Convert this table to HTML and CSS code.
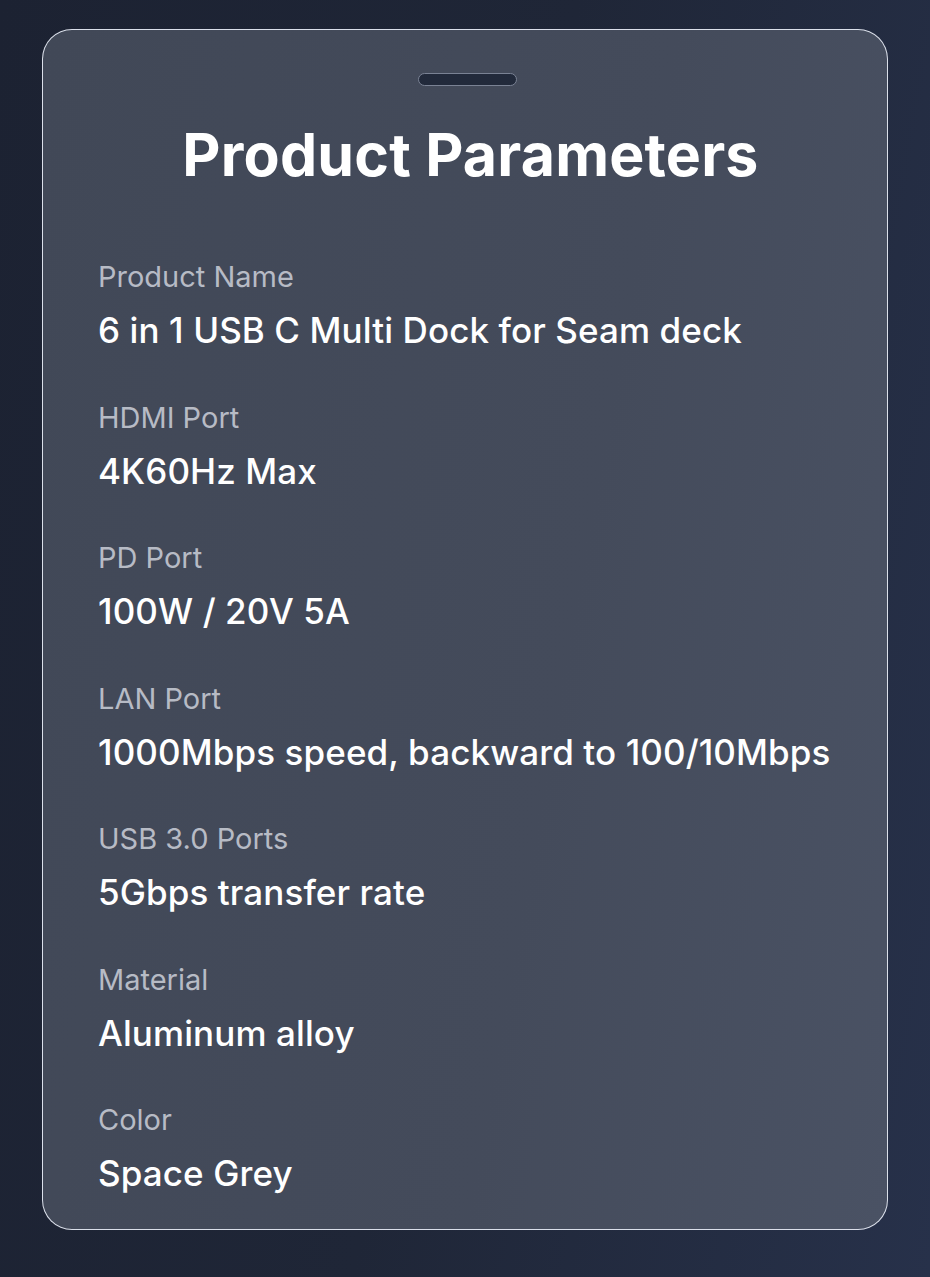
FILE: index.html
```html
<!DOCTYPE html>
<html lang="en">
<head>
<meta charset="utf-8">
<title>Product Parameters</title>
<link rel="stylesheet" href="styles.css">
</head>
<body>
<main class="card">
  <div class="handle"></div>
  <h1 class="title">Product Parameters</h1>
  <dl class="params">
    <div class="param"><dt>Product Name</dt><dd>6 in 1 USB C Multi Dock for Seam deck</dd></div>
    <div class="param"><dt>HDMI Port</dt><dd>4K60Hz Max</dd></div>
    <div class="param"><dt>PD Port</dt><dd>100W / 20V 5A</dd></div>
    <div class="param"><dt>LAN Port</dt><dd>1000Mbps speed, backward to 100/10Mbps</dd></div>
    <div class="param"><dt>USB 3.0 Ports</dt><dd>5Gbps transfer rate</dd></div>
    <div class="param"><dt>Material</dt><dd>Aluminum alloy</dd></div>
    <div class="param"><dt>Color</dt><dd>Space Grey</dd></div>
  </dl>
</main>
</body>
</html>
```
FILE: styles.css
```css
html, body {
  margin: 0;
  padding: 0;
}
body {
  width: 930px;
  height: 1277px;
  overflow: hidden;
  background: linear-gradient(100deg, #1c2232 0%, #1f2637 50%, #27314a 100%);
  font-family: Inter, "Open Sans", sans-serif;
  padding-top: 29px;
  box-sizing: border-box;
}
.card {
  margin-left: 42px;
  width: 846px;
  height: 1201px;
  box-sizing: border-box;
  border: 1.5px solid rgba(235, 240, 250, 0.9);
  border-radius: 30px;
  background: linear-gradient(100deg, #414857 0%, #444b5b 60%, #4a5264 100%);
  padding: 43px 0 0 55px;
  display: flex;
  flex-direction: column;
}
.handle {
  align-self: center;
  margin-left: -50px;
  width: 97px;
  height: 11px;
  border-radius: 7px;
  background: #222a3b;
  border: 1px solid #7a8294;
}
.title {
  margin: 29px 0 0 -44px;
  text-align: center;
  color: #ffffff;
  font-size: 59px;
  font-weight: 700;
  line-height: 80px;
  letter-spacing: 0.2px;
}
.params {
  margin: 64px 0 0;
  display: flex;
  flex-direction: column;
  gap: 48.5px;
}
.param dt {
  color: #b7bbc5;
  font-size: 29px;
  line-height: 36px;
  font-weight: 400;
}
.param dd {
  margin: 14px 0 0;
  color: #ffffff;
  font-size: 35px;
  line-height: 42px;
  font-weight: 500;
  letter-spacing: 0.1px;
}
```
